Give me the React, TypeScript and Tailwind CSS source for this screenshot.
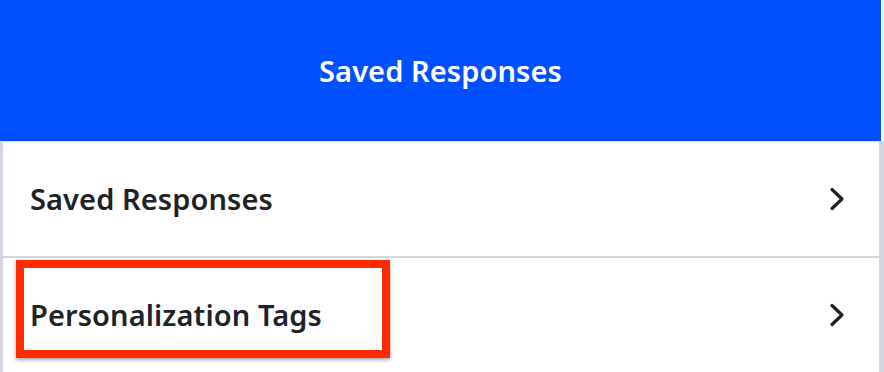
import React from 'react';

function Chevron() {
  return (
    <svg width="16" height="24" viewBox="0 0 16 24" fill="none" className="text-[#1f2328]">
      <path d="M3 2.5L13 12L3 21.5" stroke="currentColor" strokeWidth="3.2" strokeLinecap="round" strokeLinejoin="round" />
    </svg>
  );
}

export default function App() {
  const rows = ['Saved Responses', 'Personalization Tags'];

  return (
    <div className="relative w-[884px] h-[372px] overflow-hidden bg-white" style={{ fontFamily: '"Noto Sans", "Open Sans", sans-serif' }}>
      {/* Header */}
      <header className="h-[141px] w-[881px] bg-[#0050ff] flex items-center justify-center">
        <h1 className="text-[29px] font-semibold text-white tracking-[0.1px]">Saved Responses</h1>
      </header>

      {/* List */}
      <div className="border-t border-[#d3d6de] border-l-[3px] border-r-[5px] h-[231px]">
        {rows.map((label) => (
          <div key={label} className="h-[116px] border-b-2 border-[#d3d6de] flex items-center justify-between pl-[27px] pr-[34px]">
            <span className="text-[29px] font-semibold text-[#1f2328] tracking-[0.1px]">{label}</span>
            <Chevron />
          </div>
        ))}
      </div>

      {/* Highlight */}
      <div className="absolute left-[16px] top-[260px] w-[374px] h-[98px] border-[8px] border-[#ff2a00] shadow-[0_2px_4px_rgba(0,0,0,0.35)]" />
    </div>
  );
}
